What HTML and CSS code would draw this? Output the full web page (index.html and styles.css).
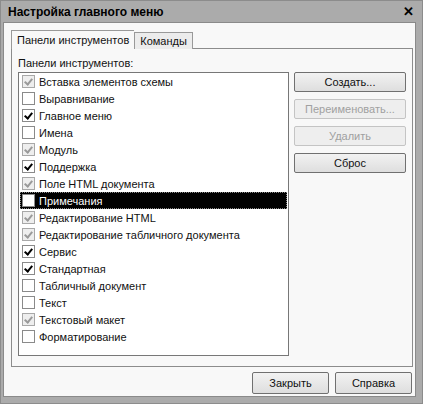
FILE: index.html
```html
<!DOCTYPE html>
<html>
<head>
    <title>Настройка главного меню</title>
    <link rel="stylesheet" href="styles.css">
</head>
<body>
<div class="window">
    <div class="titlebar">
        <span class="title">Настройка главного меню</span>
        <span class="close">&#x2715;</span>
    </div>
    <div class="client">
        <div class="tabs">
            <div class="tab active">Панели инструментов</div>
            <div class="tab">Команды</div>
        </div>
        <div class="panel">
            <div class="label">Панели инструментов:</div>
            <div class="panel-body">
                <div class="listbox">
                    <div class="row"><span class="cb gray"></span>Вставка элементов схемы</div>
                    <div class="row"><span class="cb"></span>Выравнивание</div>
                    <div class="row"><span class="cb on"></span>Главное меню</div>
                    <div class="row"><span class="cb"></span>Имена</div>
                    <div class="row"><span class="cb gray"></span>Модуль</div>
                    <div class="row"><span class="cb on"></span>Поддержка</div>
                    <div class="row"><span class="cb gray"></span>Поле HTML документа</div>
                    <div class="row selected"><span class="cb"></span>Примечания</div>
                    <div class="row"><span class="cb gray"></span>Редактирование HTML</div>
                    <div class="row"><span class="cb gray"></span>Редактирование табличного документа</div>
                    <div class="row"><span class="cb on"></span>Сервис</div>
                    <div class="row"><span class="cb on"></span>Стандартная</div>
                    <div class="row"><span class="cb"></span>Табличный документ</div>
                    <div class="row"><span class="cb"></span>Текст</div>
                    <div class="row"><span class="cb gray"></span>Текстовый макет</div>
                    <div class="row"><span class="cb"></span>Форматирование</div>
                </div>
                <div class="side-buttons">
                    <button class="btn">Создать...</button>
                    <button class="btn" disabled>Переименовать...</button>
                    <button class="btn" disabled>Удалить</button>
                    <button class="btn">Сброс</button>
                </div>
            </div>
        </div>
        <div class="footer">
            <button class="btn wide">Закрыть</button>
            <button class="btn wide">Справка</button>
        </div>
    </div>
</div>
</body>
</html>
```

FILE: styles.css
```css
body { margin: 0; font-family: "Liberation Sans", Arial, sans-serif; font-size: 11px; color: #111; }
.window { width: 423px; height: 404px; box-sizing: border-box; background: #ababab; border: 1px solid #8c8c8c; padding: 0 6px 6px 2px; display: flex; flex-direction: column; }
.titlebar { height: 21px; display: flex; align-items: center; justify-content: space-between; padding: 0 2px 0 5px; }
.title { font-weight: bold; font-size: 12px; color: #000; }
.close { font-weight: bold; font-size: 13px; color: #000; }
.client { flex: 1; background: #f8f8f8; border: 1px solid #8a8a8a; padding: 7px 0 0 7px; }

.tabs { display: flex; align-items: flex-end; height: 19px; position: relative; z-index: 1; }
.tab { height: 16px; padding: 0 5px; line-height: 16px; border: 1px solid #999; border-bottom: none; background: #ececec; }
.tab.active { height: 18px; line-height: 19px; background: #f8f8f8; border-right: none; }
.panel { width: 402px; height: 319px; box-sizing: border-box; border: 1px solid #8c8c8c; margin-top: -1px; padding: 8px 6px 0 6px; }
.label { height: 15px; }
.panel-body { display: flex; gap: 5px; }
.listbox { width: 271px; height: 284px; box-sizing: border-box; border: 1px solid #777; background: #fff; padding: 0 1px; }
.row { height: 17px; display: flex; align-items: center; gap: 4px; padding-left: 2px; white-space: nowrap; }
.row.selected { background: #000; color: #fff; outline: 1px dotted #888; outline-offset: -1px; }
.cb { width: 11px; height: 11px; border: 1px solid #8a8a8a; background: #fff; position: relative; flex: none; }
.cb.on::after, .cb.gray::after { content: ""; position: absolute; left: 3px; top: 1px; width: 3px; height: 6px; border: solid #000; border-width: 0 2px 2px 0; transform: rotate(40deg); }
.cb.gray { background: #eeeeee; border-color: #a8a8a8; }
.cb.gray::after { border-color: #9a9a9a; }

.side-buttons { display: flex; flex-direction: column; gap: 7px; }
.btn { width: 112px; height: 20px; font-family: inherit; font-size: 11px; color: #111; border: 1px solid #707070; border-radius: 2px; background: linear-gradient(#f2f2f2, #dedede); padding: 0; }
.btn:disabled { color: #a0a0a0; border-color: #c4c4c4; background: #eeeeee; }

.footer { display: flex; justify-content: flex-end; gap: 6px; padding: 5px 3px 0 0; }
.btn.wide { width: 77px; height: 22px; }
```
